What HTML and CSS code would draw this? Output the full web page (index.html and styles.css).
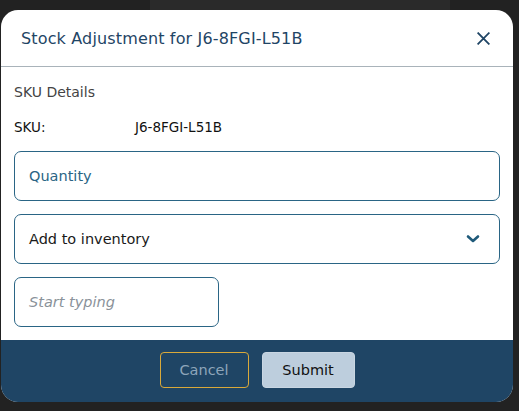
FILE: index.html
```html
<!DOCTYPE html>
<html>
<head>
<meta charset="utf-8">
<link rel="stylesheet" href="styles.css">
</head>
<body>
<div class="backdrop">
  <div class="bg-band"></div>
  <div class="modal">
    <div class="modal-header">
      <h1 class="modal-title">Stock Adjustment for J6-8FGI-L51B</h1>
      <button class="close-btn" aria-label="Close">
        <svg width="13" height="13" viewBox="0 0 13 13"><path d="M1.2 1.2 L11.8 11.8 M11.8 1.2 L1.2 11.8" stroke="#1f4565" stroke-width="1.8" stroke-linecap="square" fill="none"/></svg>
      </button>
    </div>
    <div class="modal-body">
      <div class="section-label">SKU Details</div>
      <div class="sku-row">
        <span class="sku-key">SKU:</span>
        <span class="sku-val">J6-8FGI-L51B</span>
      </div>
      <div class="field field-full"><span class="ph-quantity">Quantity</span></div>
      <div class="field field-full field-select">
        <span class="select-val">Add to inventory</span>
        <svg width="14" height="10" viewBox="0 0 14 10"><path d="M2 2.5 L7 7 L12 2.5" stroke="#1f5a7a" stroke-width="2.6" fill="none" stroke-linecap="round" stroke-linejoin="round"/></svg>
      </div>
      <div class="field field-short"><span class="ph-typing">Start typing</span></div>
    </div>
    <div class="modal-footer">
      <button class="btn btn-cancel">Cancel</button>
      <button class="btn btn-submit">Submit</button>
    </div>
  </div>
</div>
</body>
</html>
```
FILE: styles.css
```css
* { box-sizing: border-box; }
html, body { margin: 0; padding: 0; }
body {
  background: #1f1f1f;
  font-family: "DejaVu Sans", sans-serif;
  width: 519px;
  height: 411px;
  overflow: hidden;
}
.backdrop {
  position: relative;
  width: 519px;
  height: 411px;
  background: #222222;
}
.bg-band {
  position: absolute;
  left: 150px;
  top: 0;
  width: 300px;
  height: 10px;
  background: #2a2a2a;
}
.modal {
  position: absolute;
  left: 1px;
  top: 10px;
  width: 512px;
  height: 392px;
  background: #ffffff;
  border-radius: 17px;
  overflow: hidden;
  display: flex;
  flex-direction: column;
}
.modal-header {
  height: 57px;
  flex: none;
  display: flex;
  align-items: center;
  justify-content: space-between;
  padding: 0 23px 0 20px;
  border-bottom: 1px solid #a9b3ba;
}
.modal-title {
  margin: 0;
  font-size: 16px;
  font-weight: 500;
  color: #1f4565;
  letter-spacing: 0.15px;
}
.close-btn {
  border: 0;
  background: none;
  padding: 0;
  width: 13px;
  height: 13px;
  display: flex;
}
.modal-body {
  flex: 1;
  padding: 16px 13px 0 13px;
  display: flex;
  flex-direction: column;
}
.section-label {
  font-size: 14px;
  color: #444;
  line-height: 18px;
}
.sku-row {
  display: flex;
  margin-top: 17px;
  font-size: 13.5px;
  line-height: 18px;
  color: #111;
  font-weight: 500;
}
.sku-key { width: 121px; }
.field {
  height: 50px;
  border: 1px solid #2a6585;
  border-radius: 7px;
  display: flex;
  align-items: center;
  padding: 0 14px;
  font-size: 14.5px;
  flex: none;
}
.field-full { width: 486px; margin-top: 15px; }
.field-full + .field-full { margin-top: 13px; }
.field-select { justify-content: space-between; padding-right: 19px; }
.field-short { width: 205px; margin-top: 13px; }
.ph-quantity { color: #2a6585; }
.select-val { color: #1a1a1a; }
.ph-typing { color: #8a929a; font-style: italic; }
.modal-footer {
  height: 62px;
  flex: none;
  background: #1f4565;
  display: flex;
  justify-content: center;
  align-items: flex-start;
  gap: 13px;
  padding-top: 12px;
}
.btn {
  height: 36px;
  border-radius: 4px;
  font-family: "DejaVu Sans", sans-serif;
  font-size: 14.5px;
  cursor: pointer;
}
.btn-cancel {
  width: 89px;
  background: transparent;
  border: 1px solid #d9a93a;
  color: #8ea5ba;
}
.btn-submit {
  width: 93px;
  background: #bdcedd;
  border: 1px solid #c9d6e2;
  color: #111;
  font-weight: 500;
}
```
